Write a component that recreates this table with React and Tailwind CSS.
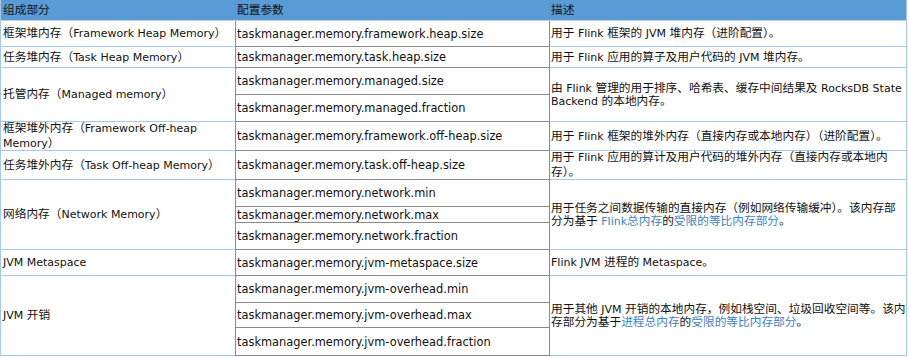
import React from 'react';

// Les caractères CJK sont un peu plus grands que le texte latin dans la capture
const CJK_RE = /([\u3000-\u303f\u3400-\u9fff\uff00-\uffef]+)/;

const Mixed = ({ text }) =>
  text.split(CJK_RE).map((part, i) =>
    i % 2 === 1 ? (
      <span key={i} className="text-[11.7px]">
        {part}
      </span>
    ) : (
      part
    )
  );

const Link = ({ text }) => (
  <span className="text-[#3d7fc0]">
    <Mixed text={text} />
  </span>
);

const rows = [
  {
    h: 'h-[26px]',
    name: ['框架堆内存（Framework Heap Memory）'],
    params: [{ key: 'taskmanager.memory.framework.heap.size', h: 'h-full' }],
    desc: [['用于 Flink 框架的 JVM 堆内存（进阶配置）。']],
  },
  {
    h: 'h-[21px]',
    name: ['任务堆内存（Task Heap Memory）'],
    params: [{ key: 'taskmanager.memory.task.heap.size', h: 'h-full' }],
    desc: [['用于 Flink 应用的算子及用户代码的 JVM 堆内存。']],
  },
  {
    h: 'h-[54px]',
    name: ['托管内存（Managed memory）'],
    params: [
      { key: 'taskmanager.memory.managed.size', h: 'h-[28px]' },
      { key: 'taskmanager.memory.managed.fraction', h: 'h-[26px]' },
    ],
    descLead: 'leading-[13px]',
    desc: [['由 Flink 管理的用于排序、哈希表、缓存中间结果及 RocksDB State'], ['Backend 的本地内存。']],
  },
  {
    h: 'h-[29px]',
    name: ['框架堆外内存（Framework Off-heap', 'Memory）'],
    params: [{ key: 'taskmanager.memory.framework.off-heap.size', h: 'h-full' }],
    desc: [['用于 Flink 框架的堆外内存（直接内存或本地内存）（进阶配置）。']],
  },
  {
    h: 'h-[29px]',
    name: ['任务堆外内存（Task Off-heap Memory）'],
    params: [{ key: 'taskmanager.memory.task.off-heap.size', h: 'h-full' }],
    desc: [['用于 Flink 应用的算计及用户代码的堆外内存（直接内存或本地内'], ['存）。']],
  },
  {
    h: 'h-[70px]',
    name: ['网络内存（Network Memory）'],
    params: [
      { key: 'taskmanager.memory.network.min', h: 'h-[27px]' },
      { key: 'taskmanager.memory.network.max', h: 'h-[17px]' },
      { key: 'taskmanager.memory.network.fraction', h: 'h-[26px]' },
    ],
    descLead: 'leading-[13px]',
    desc: [
      ['用于任务之间数据传输的直接内存（例如网络传输缓冲）。该内存部'],
      ['分为基于 ', { link: 'Flink总内存' }, '的', { link: '受限的等比内存部分' }, '。'],
    ],
  },
  {
    h: 'h-[26px]',
    name: ['JVM Metaspace'],
    params: [{ key: 'taskmanager.memory.jvm-metaspace.size', h: 'h-full' }],
    desc: [['Flink JVM 进程的 Metaspace。']],
  },
  {
    h: 'h-[80px]',
    name: ['JVM 开销'],
    params: [
      { key: 'taskmanager.memory.jvm-overhead.min', h: 'h-[27px]' },
      { key: 'taskmanager.memory.jvm-overhead.max', h: 'h-[26px]' },
      { key: 'taskmanager.memory.jvm-overhead.fraction', h: 'h-[27px]' },
    ],
    descLead: 'leading-[13px]',
    desc: [
      ['用于其他 JVM 开销的本地内存，例如栈空间、垃圾回收空间等。该内'],
      ['存部分为基于', { link: '进程总内存' }, '的', { link: '受限的等比内存部分' }, '。'],
    ],
  },
];

const App = () => {
  return (
    <div className="w-[909px] h-[358px] bg-white text-[#111] text-[11px] leading-[14px] font-[DejaVu_Sans,Noto_Sans_CJK_SC,sans-serif] whitespace-nowrap">
      <div className="w-[907px] flex flex-col">
        {/* En-tête */}
        <div className="flex h-[21px] bg-[#5b9bd5] border-b border-[#b7d2ee]">
          <div className="w-[235px] border-l border-[#a6c8ea] pl-[2px] pt-[3px]">
            <Mixed text="组成部分" />
          </div>
          <div className="w-[315px] border-x border-[#8a8a8a] pl-[1px] pt-[3px]">
            <Mixed text="配置参数" />
          </div>
          <div className="w-[357px] border-r border-[#a6c8ea] pl-[1px] pt-[3px]">
            <Mixed text="描述" />
          </div>
        </div>

        {rows.map((row, i) => (
          <div key={i} className={`flex ${row.h}`}>
            <div className="w-[235px] flex items-center border-l border-b border-[#a6c8ea] pl-[2px]">
              <div>
                {row.name.map((line, k) => (
                  <div key={k}>
                    <Mixed text={line} />
                  </div>
                ))}
              </div>
            </div>
            <div className="w-[315px] flex flex-col border-x border-b border-[#8a8a8a] text-[11.4px]">
              {row.params.map((p, j) => (
                <div
                  key={p.key}
                  className={`${p.h} flex items-center pl-[1px] ${j < row.params.length - 1 ? 'border-b border-[#8a8a8a]' : ''}`}
                >
                  {p.key}
                </div>
              ))}
            </div>
            <div className="w-[357px] flex items-center border-r border-b border-[#a6c8ea] pl-[1px]">
              <div className={row.descLead || 'leading-[14px]'}>
                {row.desc.map((line, k) => (
                  <div key={k}>
                    {line.map((seg, m) =>
                      typeof seg === 'string' ? <Mixed key={m} text={seg} /> : <Link key={m} text={seg.link} />
                    )}
                  </div>
                ))}
              </div>
            </div>
          </div>
        ))}
      </div>
    </div>
  );
};

export default App;
